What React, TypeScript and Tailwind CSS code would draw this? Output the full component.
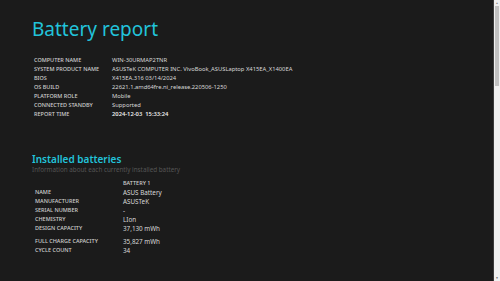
const systemRows: [string, string][] = [
  ["COMPUTER NAME", "WIN-30URMAP2TNR"],
  ["SYSTEM PRODUCT NAME", "ASUSTeK COMPUTER INC. VivoBook_ASUSLaptop X415EA_X1400EA"],
  ["BIOS", "X415EA.316 03/14/2024"],
  ["OS BUILD", "22621.1.amd64fre.ni_release.220506-1250"],
  ["PLATFORM ROLE", "Mobile"],
  ["CONNECTED STANDBY", "Supported"],
  ["REPORT TIME", "2024-12-03  15:33:24"],
];

const batteryRows: [string, string, string][] = [
  ["NAME", "ASUS Battery", ""],
  ["MANUFACTURER", "ASUSTeK", ""],
  ["SERIAL NUMBER", "-", ""],
  ["CHEMISTRY", "LIon", ""],
  ["DESIGN CAPACITY", "37,130 mWh", "mb-[4px]"],
  ["FULL CHARGE CAPACITY", "35,827 mWh", ""],
  ["CYCLE COUNT", "34", ""],
];

export default function App() {
  return (
    <div className="flex h-[281px] w-[500px] overflow-hidden bg-[#1b1b1b] font-['Noto_Sans',sans-serif]">
      <div className="flex-1">
        <h1 className="ml-[32px] mt-[15px] text-[19px] leading-[28px] text-[#22c3da]">Battery report</h1>

        {/* システム情報テーブル */}
        <div className="ml-[34px] mt-[13px] flex flex-col">
          {systemRows.map(([label, value], i) => (
            <div key={label} className="flex h-[9px] items-center">
              <div className="w-[78px] text-[5.5px] font-medium text-[#cfcfcf]">{label}</div>
              <div
                className={`whitespace-pre text-[5.8px] text-[#d8d8d8] ${i === systemRows.length - 1 ? "font-semibold text-[#ececec]" : ""}`}
              >
                {value}
              </div>
            </div>
          ))}
        </div>

        <h2 className="ml-[32px] mt-[34px] text-[10px] font-semibold leading-[12px] text-[#22c3da]">
          Installed batteries
        </h2>
        <div className="ml-[32px] text-[6.3px] leading-[9px] text-[#555555]">
          Information about each currently installed battery
        </div>

        <div className="ml-[35px] mt-[5px] flex flex-col">
          <div className="flex h-[9px] items-center">
            <div className="w-[88px]" />
            <div className="text-[5.5px] font-medium text-[#cfcfcf]">BATTERY 1</div>
          </div>
          {batteryRows.map(([label, value, extra]) => (
            <div key={label} className={`flex h-[9px] items-center ${extra}`}>
              <div className="w-[88px] text-[5.5px] font-medium text-[#cfcfcf]">{label}</div>
              <div className="text-[6.3px] text-[#d8d8d8]">{value}</div>
            </div>
          ))}
        </div>
      </div>

      {/* スクロールバー */}
      <div className="flex w-[7px] flex-col border-l border-[#3a3a3a] bg-[#f0f0f0]">
        <div className="flex h-[6px] items-center justify-center text-[3px] text-[#888]">▲</div>
        <div className="mx-[1px] h-[80px] bg-[#c1c1c1]" />
        <div className="flex-1" />
        <div className="flex h-[6px] items-center justify-center text-[3px] text-[#555]">▼</div>
      </div>
    </div>
  );
}
